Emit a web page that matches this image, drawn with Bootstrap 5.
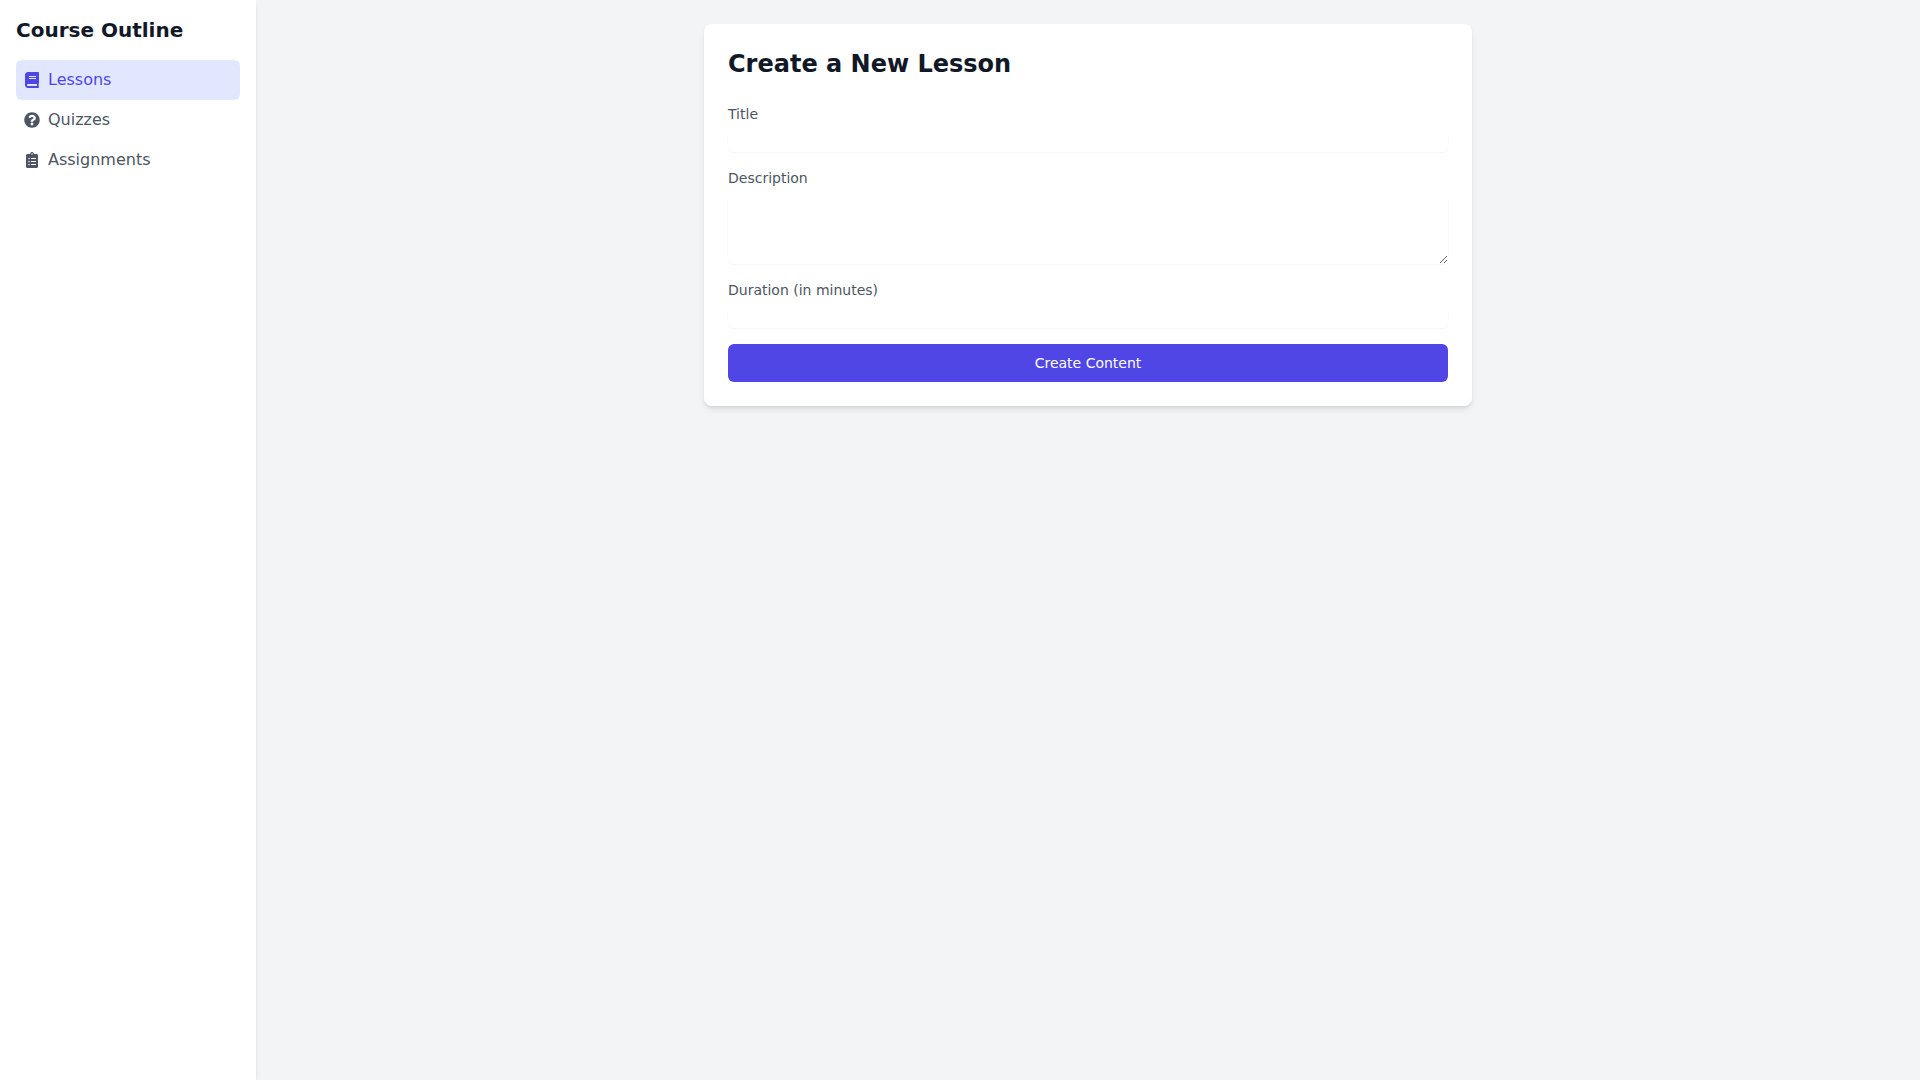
<!DOCTYPE html>
<html lang="en">
<head>
    <meta charset="UTF-8" />
    <meta name="viewport" content="width=device-width, initial-scale=1.0" />
    <title>Course Outline</title>
    <link href="https://cdn.jsdelivr.net/npm/bootstrap@5.3.3/dist/css/bootstrap.min.css" rel="stylesheet" />
    <style>
        body {
            background: #f3f4f6;
            font-family: "DejaVu Sans", sans-serif;
            height: 100vh;
            overflow: hidden;
        }

        .side-panel {
            width: 256px;
            background: #fff;
            box-shadow: 0 4px 6px -1px rgba(0, 0, 0, .1), 0 2px 4px -2px rgba(0, 0, 0, .1);
        }

        .side-title {
            font-size: 20px;
            line-height: 28px;
            font-weight: 700;
            color: #111827;
            margin-bottom: 16px;
        }

        .side-link {
            display: flex;
            align-items: center;
            gap: 8px;
            padding: 8px;
            font-size: 16px;
            line-height: 24px;
            color: #4b5563;
            border-radius: 6px;
            text-decoration: none;
        }

        .side-link svg {
            width: 16px;
            height: 16px;
            fill: currentColor;
        }

        .side-link.current {
            background: #e0e7ff;
            color: #4f46e5;
        }

        .lesson-box {
            width: 768px;
            margin-top: 24px;
            padding: 24px;
            background: #fff;
            border: 0;
            border-radius: 8px;
            box-shadow: 0 4px 6px -1px rgba(0, 0, 0, .1), 0 2px 4px -2px rgba(0, 0, 0, .1);
        }

        .lesson-title {
            font-size: 24px;
            line-height: 32px;
            font-weight: 700;
            color: #111827;
            margin-bottom: 24px;
        }

        .lesson-box .form-label {
            display: block;
            font-size: 14px;
            line-height: 20px;
            color: #4b5563;
            margin-bottom: 4px;
        }

        .lesson-box .form-control {
            height: 24px;
            min-height: 0;
            padding: 0;
            border: 0;
            border-radius: 6px;
            box-shadow: 0 1px 2px 0 rgba(0, 0, 0, .05);
        }

        .lesson-box textarea.form-control {
            height: 72px;
            display: block;
            resize: vertical;
        }

        .field-gap {
            margin-bottom: 16px;
        }

        .create-btn {
            display: block;
            height: 38px;
            padding: 8px 16px;
            font-size: 14px;
            line-height: 22px;
            color: #fff;
            background: #4f46e5;
            border: 0;
            border-radius: 6px;
        }

        .create-btn:hover {
            color: #fff;
            background: #4338ca;
        }
    </style>
</head>
<body>

<div class="d-flex h-100">
    <!-- sidebar -->
    <aside class="side-panel flex-shrink-0 p-3">
        <div class="side-title">Course Outline</div>
        <nav class="d-flex flex-column">
            <a href="#" class="side-link current">
                <svg viewBox="0 0 448 512"><path d="M448 360V24c0-13.3-10.7-24-24-24H96C43 0 0 43 0 96v320c0 53 43 96 96 96h328c13.3 0 24-10.7 24-24v-16c0-7.5-3.5-14.3-8.9-18.7-4.2-15.4-4.2-59.3 0-74.7 5.4-4.3 8.9-11.1 8.9-18.6zM128 134c0-3.3 2.7-6 6-6h212c3.3 0 6 2.7 6 6v20c0 3.3-2.7 6-6 6H134c-3.3 0-6-2.7-6-6v-20zm0 64c0-3.3 2.7-6 6-6h212c3.3 0 6 2.7 6 6v20c0 3.3-2.7 6-6 6H134c-3.3 0-6-2.7-6-6v-20zm253.4 250H96c-17.7 0-32-14.3-32-32 0-17.6 14.4-32 32-32h285.4c-1.9 17.1-1.9 46.9 0 64z"/></svg>
                Lessons
            </a>
            <a href="#" class="side-link">
                <svg viewBox="0 0 512 512"><path d="M504 256c0 136.997-111.043 248-248 248S8 392.997 8 256C8 119.083 119.043 8 256 8s248 111.083 248 248zM262.655 90c-54.497 0-89.255 22.957-116.549 63.758-3.536 5.286-2.353 12.415 2.715 16.258l34.699 26.31c5.205 3.947 12.621 3.008 16.665-2.122 17.864-22.658 30.113-35.797 57.303-35.797 20.429 0 45.698 13.148 45.698 32.958 0 14.976-12.363 22.667-32.534 33.976C247.128 238.528 216 254.941 216 296v4c0 6.627 5.373 12 12 12h56c6.627 0 12-5.373 12-12v-1.333c0-28.462 83.186-29.647 83.186-106.667 0-58.002-60.165-102-116.531-102zM256 338c-25.365 0-46 20.635-46 46 0 25.364 20.635 46 46 46s46-20.636 46-46c0-25.365-20.635-46-46-46z"/></svg>
                Quizzes
            </a>
            <a href="#" class="side-link">
                <svg viewBox="0 0 384 512"><path d="M336 64h-80c0-35.3-28.7-64-64-64s-64 28.7-64 64H48C21.5 64 0 85.5 0 112v352c0 26.5 21.5 48 48 48h288c26.5 0 48-21.5 48-48V112c0-26.5-21.5-48-48-48zM96 424c-13.3 0-24-10.7-24-24s10.7-24 24-24 24 10.7 24 24-10.7 24-24 24zm0-96c-13.3 0-24-10.7-24-24s10.7-24 24-24 24 10.7 24 24-10.7 24-24 24zm0-96c-13.3 0-24-10.7-24-24s10.7-24 24-24 24 10.7 24 24-10.7 24-24 24zm96-192c13.3 0 24 10.7 24 24s-10.7 24-24 24-24-10.7-24-24 10.7-24 24-24zm128 368c0 4.4-3.6 8-8 8H168c-4.4 0-8-3.6-8-8v-16c0-4.4 3.6-8 8-8h144c4.4 0 8 3.6 8 8v16zm0-96c0 4.4-3.6 8-8 8H168c-4.4 0-8-3.6-8-8v-16c0-4.4 3.6-8 8-8h144c4.4 0 8 3.6 8 8v16zm0-96c0 4.4-3.6 8-8 8H168c-4.4 0-8-3.6-8-8v-16c0-4.4 3.6-8 8-8h144c4.4 0 8 3.6 8 8v16z"/></svg>
                Assignments
            </a>
        </nav>
    </aside>

    <!-- form -->
    <main class="flex-grow-1 d-flex justify-content-center align-items-start">
        <div class="card lesson-box">
            <h1 class="lesson-title">Create a New Lesson</h1>
            <form>
                <div class="field-gap">
                    <label class="form-label" for="lessonTitle">Title</label>
                    <input type="text" class="form-control" id="lessonTitle" />
                </div>
                <div class="field-gap">
                    <label class="form-label" for="lessonDesc">Description</label>
                    <textarea class="form-control" id="lessonDesc"></textarea>
                </div>
                <div class="field-gap">
                    <label class="form-label" for="lessonDuration">Duration (in minutes)</label>
                    <input type="text" class="form-control" id="lessonDuration" />
                </div>
                <button type="button" class="btn create-btn w-100">Create Content</button>
            </form>
        </div>
    </main>
</div>

<script src="https://cdn.jsdelivr.net/npm/bootstrap@5.3.3/dist/js/bootstrap.bundle.min.js"></script>
</body>
</html>
